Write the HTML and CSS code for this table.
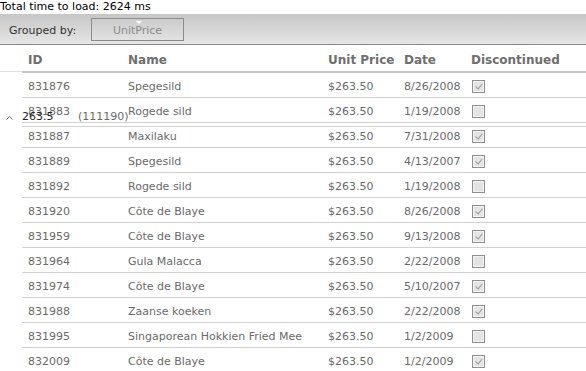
FILE: index.html
```html
<!DOCTYPE html>
<html>
<head>
<meta charset="utf-8">
<link rel="stylesheet" href="styles.css">
</head>
<body>
<div class="load">Total time to load: 2624 ms</div>
<div class="groupbar">
  <span class="glabel">Grouped by:</span>
  <span class="gbtn"><span class="tri"></span>UnitPrice</span>
</div>
<div class="grid">
  <div class="head">
    <div class="c id">ID</div><div class="c name">Name</div><div class="c price">Unit Price</div><div class="c date">Date</div><div class="c disc">Discontinued</div>
  </div>
  <div class="body">
    <div class="row"><div class="c id">831876</div><div class="c name">Spegesild</div><div class="c price">$263.50</div><div class="c date">8/26/2008</div><div class="c disc"><span class="cb on"></span></div></div>
    <div class="row"><div class="c id">831883</div><div class="c name">Rogede sild</div><div class="c price">$263.50</div><div class="c date">1/19/2008</div><div class="c disc"><span class="cb"></span></div></div>
    <div class="row"><div class="c id">831887</div><div class="c name">Maxilaku</div><div class="c price">$263.50</div><div class="c date">7/31/2008</div><div class="c disc"><span class="cb on"></span></div></div>
    <div class="row"><div class="c id">831889</div><div class="c name">Spegesild</div><div class="c price">$263.50</div><div class="c date">4/13/2007</div><div class="c disc"><span class="cb on"></span></div></div>
    <div class="row"><div class="c id">831892</div><div class="c name">Rogede sild</div><div class="c price">$263.50</div><div class="c date">1/19/2008</div><div class="c disc"><span class="cb"></span></div></div>
    <div class="row"><div class="c id">831920</div><div class="c name">Côte de Blaye</div><div class="c price">$263.50</div><div class="c date">8/26/2008</div><div class="c disc"><span class="cb on"></span></div></div>
    <div class="row"><div class="c id">831959</div><div class="c name">Côte de Blaye</div><div class="c price">$263.50</div><div class="c date">9/13/2008</div><div class="c disc"><span class="cb on"></span></div></div>
    <div class="row"><div class="c id">831964</div><div class="c name">Gula Malacca</div><div class="c price">$263.50</div><div class="c date">2/22/2008</div><div class="c disc"><span class="cb"></span></div></div>
    <div class="row"><div class="c id">831974</div><div class="c name">Côte de Blaye</div><div class="c price">$263.50</div><div class="c date">5/10/2007</div><div class="c disc"><span class="cb on"></span></div></div>
    <div class="row"><div class="c id">831988</div><div class="c name">Zaanse koeken</div><div class="c price">$263.50</div><div class="c date">2/22/2008</div><div class="c disc"><span class="cb on"></span></div></div>
    <div class="row"><div class="c id">831995</div><div class="c name">Singaporean Hokkien Fried Mee</div><div class="c price">$263.50</div><div class="c date">1/2/2009</div><div class="c disc"><span class="cb"></span></div></div>
    <div class="row"><div class="c id">832009</div><div class="c name">Côte de Blaye</div><div class="c price">$263.50</div><div class="c date">1/2/2009</div><div class="c disc"><span class="cb on"></span></div></div>
    <div class="grouphead">
      <svg class="caret" width="7" height="5" viewBox="0 0 7 5"><path d="M0.5 4.5 L3.5 1.5 L6.5 4.5" fill="none" stroke="#777" stroke-width="1"/></svg>
      <span class="gkey">263.5</span>
      <span class="gcount">(111190)</span>
    </div>
  </div>
</div>
</body>
</html>
```
FILE: styles.css
```css
html, body {
  margin: 0;
  padding: 0;
  background: #fff;
  overflow: hidden;
}
body {
  font-family: "DejaVu Sans", Verdana, sans-serif;
  font-size: 11px;
  width: 586px;
  height: 371px;
}
.load {
  height: 14px;
  line-height: 13px;
  color: #000;
}
.groupbar {
  height: 30px;
  background: linear-gradient(#c6c6c6, #e6e6e6);
  border-bottom: 1px solid #8a8a8a;
  display: flex;
  align-items: center;
}
.glabel {
  margin-left: 9px;
  margin-top: 2px;
  color: #333;
  width: 82px;
}
.gbtn {
  position: relative;
  box-sizing: border-box;
  width: 93px;
  height: 23px;
  margin-top: 1px;
  border: 1px solid #8c8c8c;
  color: #8a8a8a;
  display: flex;
  align-items: center;
  justify-content: center;
  font-size: 11px;
  padding-top: 1px;
}
.tri {
  position: absolute;
  top: 2px;
  left: 44px;
  width: 0;
  height: 0;
  border-left: 3px solid transparent;
  border-right: 3px solid transparent;
  border-top: 3px solid #fff;
}
.grid {
  position: relative;
}
.head {
  display: flex;
  height: 23px;
  padding-top: 3px;
  align-items: center;
  font-weight: bold;
  color: #6e6e6e;
  font-size: 12px;
  border-bottom: 1px solid #dedede;
  position: relative;
  padding-left: 22px;
}
.head::after {
  content: "";
  position: absolute;
  left: 22px;
  right: 0;
  bottom: -2px;
  height: 2px;
  background: #c6c6c6;
}
.body {
  position: relative;
  margin-top: 1px;
}
.row {
  display: flex;
  align-items: center;
  height: 21px;
  padding-top: 3px;
  border-bottom: 1px solid #d2d2d2;
  margin-left: 22px;
  color: #6a6a6a;
}
.c {
  padding-left: 6px;
  box-sizing: border-box;
  white-space: nowrap;
  overflow: hidden;
}
.id { width: 100px; }
.name { width: 200px; }
.price { width: 76px; }
.date { width: 67px; }
.disc { flex: 1; padding-left: 7px; display: flex; align-items: center; }
.head .disc { padding-left: 6px; }
.cb {
  display: block;
  box-sizing: border-box;
  width: 13px;
  height: 13px;
  border: 1px solid #8e8e8e;
  background: #e4e4e4;
  box-shadow: inset 0 0 0 1px #f4f4f4;
  position: relative;
}
.cb.on::after {
  content: "";
  position: absolute;
  left: 4px;
  top: 1px;
  width: 3px;
  height: 6px;
  border-right: 1.5px solid #9a9a9a;
  border-bottom: 1.5px solid #9a9a9a;
  transform: rotate(40deg);
}
.grouphead {
  position: absolute;
  left: 0;
  right: 0;
  top: 33px;
  height: 21px;
  display: flex;
  align-items: center;
}
.grouphead::after {
  content: "";
  position: absolute;
  left: 22px;
  right: 0;
  bottom: 0;
  height: 1px;
  background: #d2d2d2;
}
.caret {
  margin-left: 6px;
  margin-right: 9px;
  margin-top: 2px;
}
.gkey {
  color: #222;
  width: 56px;
}
.gcount {
  color: #6a6a6a;
}
```
